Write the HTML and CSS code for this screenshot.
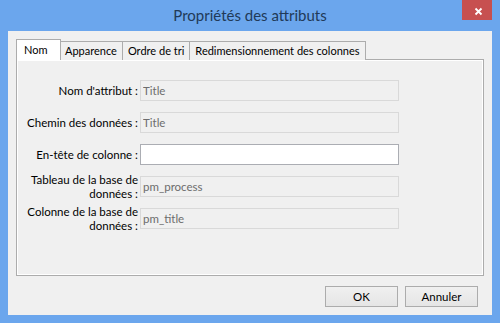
FILE: index.html
```html
<!DOCTYPE html>
<html lang="fr">
<head>
  <meta charset="UTF-8">
  <title>Propriétés des attributs</title>
  <link rel="stylesheet" href="styles.css">
</head>
<body>
  <div class="window">
    <div class="titlebar">
      <span></span>
      <span class="title">Propriétés des attributs</span>
      <button class="close" type="button" aria-label="Fermer">
        <svg width="30" height="20" viewBox="0 0 30 20">
          <path d="M13.5 8.5 L19.5 14.5 M19.5 8.5 L13.5 14.5" stroke="#fff" stroke-width="1.8" fill="none"/>
        </svg>
      </button>
    </div>

    <div class="client">
      <div class="tabs">
        <div class="tab active">Nom</div>
        <div class="tab">Apparence</div>
        <div class="tab">Ordre de tri</div>
        <div class="tab">Redimensionnement des colonnes</div>
      </div>

      <div class="panel">
        <div class="row">
          <label for="attr">Nom d'attribut :</label>
          <input type="text" id="attr" value="Title" disabled>
        </div>
        <div class="row">
          <label for="path">Chemin des données :</label>
          <input type="text" id="path" value="Title" disabled>
        </div>
        <div class="row">
          <label for="header">En-tête de colonne :</label>
          <input type="text" id="header" value="">
        </div>
        <div class="row">
          <label for="table">Tableau de la base de données :</label>
          <input type="text" id="table" value="pm_process" disabled>
        </div>
        <div class="row">
          <label for="column">Colonne de la base de données :</label>
          <input type="text" id="column" value="pm_title" disabled>
        </div>
      </div>

      <div class="actions">
        <button type="button" class="btn">OK</button>
        <button type="button" class="btn">Annuler</button>
      </div>
    </div>
  </div>
</body>
</html>
```

FILE: styles.css
```css
body {
  margin: 0;
  padding: 0;
  font-family: Lato, "Liberation Sans", sans-serif;
  font-size: 11px;
  color: #000;
}
.window {
  width: 500px;
  height: 323px;
  box-sizing: border-box;
  background: #6ba6ed;
  padding: 0 8px 8px;
}
.titlebar {
  height: 31px;
  display: grid;
  grid-template-columns: 30px 1fr 30px;
  align-items: start;
}
.title {
  text-align: center;
  font-size: 15px;
  line-height: 30px;
  color: #213a58;
}
.close {
  width: 30px;
  height: 20px;
  padding: 0;
  border: none;
  background: #c75050;
  display: block;
}
.close svg {
  display: block;
}
.client {
  height: 284px;
  box-sizing: border-box;
  background: #f0f0f0;
  padding: 8px 8px 0;
}
.tabs {
  display: flex;
  align-items: flex-end;
  height: 21px;
  margin-bottom: -1px;
  position: relative;
  z-index: 1;
}
.tab {
  height: 18px;
  line-height: 17px;
  padding: 0 5px;
  border: 1px solid #acacac;
  border-bottom: none;
  background: #f0f0f0;
  margin-left: -1px;
  white-space: nowrap;
}
.tab.active {
  min-width: 45px;
  box-sizing: border-box;
  height: 21px;
  line-height: 20px;
  margin-left: 0;
  margin-right: -1px;
  padding: 0 7px;
  background: #fff;
  position: relative;
  z-index: 2;
}
.panel {
  height: 217px;
  box-sizing: border-box;
  border: 1px solid #acacac;
  box-shadow: inset 1px 1px #fff, inset -1px -1px #fff;
  background: #f0f0f0;
  padding-top: 20px;
  display: flex;
  flex-direction: column;
  gap: 11px;
}
.row {
  display: flex;
  align-items: center;
  height: 21px;
}
.row label {
  width: 121px;
  margin-right: 2px;
  text-align: right;
  font-size: 11.5px;
  line-height: 14px;
}
.row input {
  width: 259px;
  height: 21px;
  box-sizing: border-box;
  margin: 0;
  padding: 0 2px;
  font-family: inherit;
  font-size: 11.5px;
  color: #000;
  background: #fff;
  border: 1px solid #abadb3;
  outline: none;
}
.row input:disabled {
  color: #6d6d6d;
  background: #f0f0f0;
  border-color: #d9d9d9;
}
.actions {
  display: flex;
  justify-content: flex-end;
  gap: 7px;
  margin-top: 10px;
  padding-right: 6px;
}
.btn {
  width: 73px;
  height: 21px;
  padding: 0;
  font-family: inherit;
  font-size: 11.5px;
  color: #000;
  border: 1px solid #acacac;
  background: linear-gradient(#f0f0f0, #e5e5e5);
}
```
